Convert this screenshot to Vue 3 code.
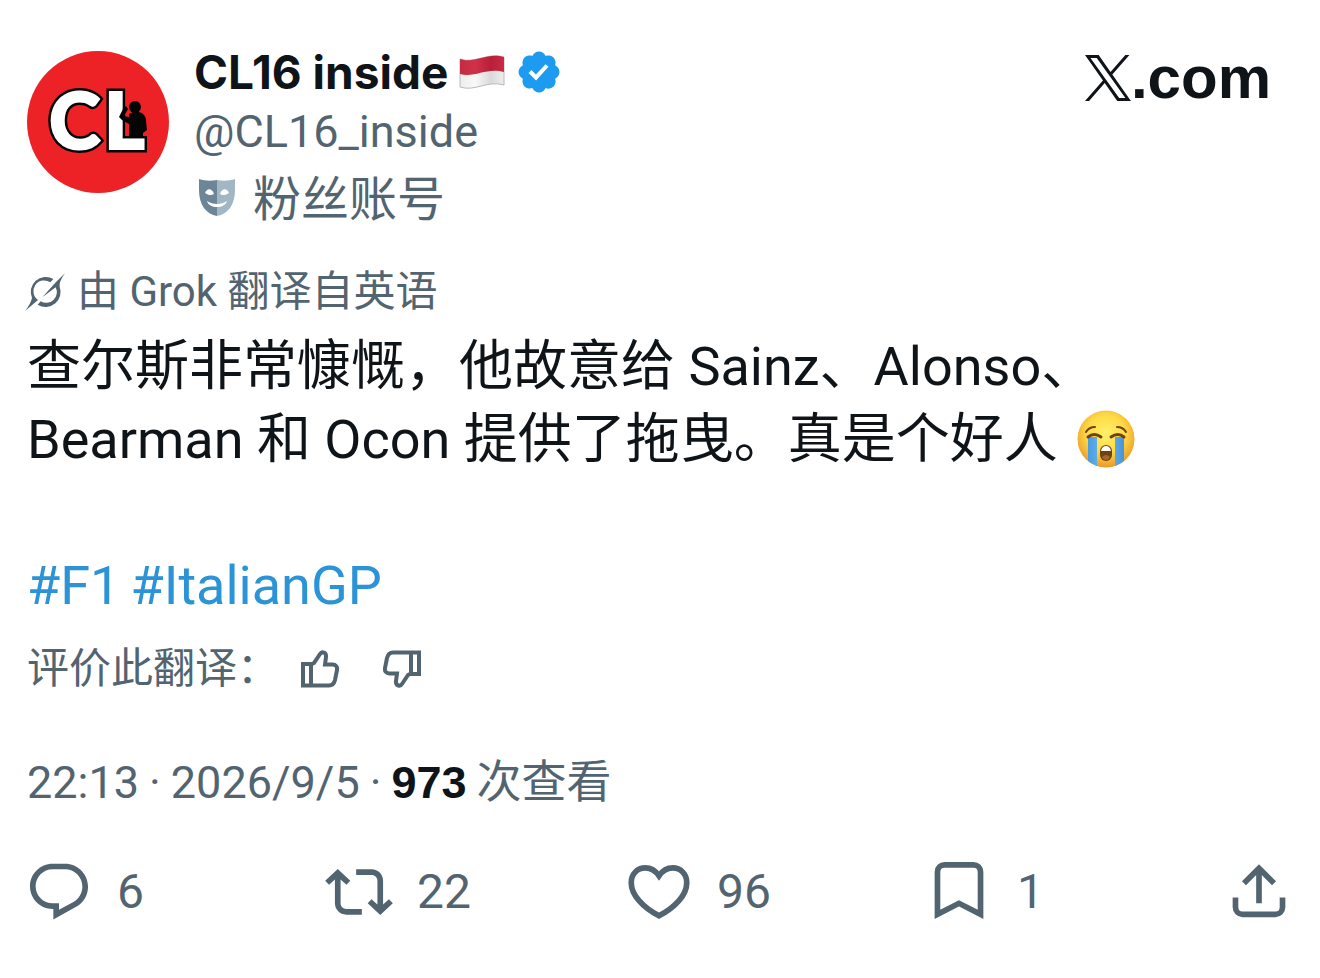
<!--
  Post detail card
  author, translated text, stats and actions
-->
<template>
  <article class="post">
    <header class="post-header">
      <svg class="avatar" viewBox="0 0 142 142" role="img" aria-label="CL16 inside">
        <circle cx="71" cy="71" r="71" fill="#ec2227" />
        <g class="avatar-letters back" aria-hidden="true">
          <text x="22" y="98">C</text>
          <text x="77" y="98">L</text>
        </g>
        <g class="avatar-letters">
          <text x="22" y="98">C</text>
          <text x="77" y="98">L</text>
        </g>
        <g fill="#050505">
          <circle cx="108" cy="56" r="6" />
          <path d="M102 63l6-3 7 2q4 3 4 8l1 9-4 3v4h-14V73l-7-4-3-3 4-8 3-3 2 3-4 7 5 1z" />
        </g>
      </svg>

      <div class="author">
        <div class="author-row">
          <span class="author-name">CL16 inside</span>
          <svg class="flag" viewBox="0 0 46 34" role="img" aria-label="Indonesia">
            <defs>
              <linearGradient id="flagRed" x1="0" x2="1">
                <stop offset="0" stop-color="#c32c44" />
                <stop offset=".35" stop-color="#d13148" />
                <stop offset=".7" stop-color="#b81f38" />
                <stop offset="1" stop-color="#c92c44" />
              </linearGradient>
              <linearGradient id="flagWhite" x1="0" x2="1">
                <stop offset="0" stop-color="#ededed" />
                <stop offset=".35" stop-color="#f8f8f8" />
                <stop offset=".7" stop-color="#d9d9da" />
                <stop offset="1" stop-color="#eeeeee" />
              </linearGradient>
            </defs>
            <path d="M1 4c15 5 27-7 44-2v28c-17-5-29 7-44 2z" fill="url(#flagWhite)" stroke="#b9b9bb" />
            <path d="M1 4c15 5 27-7 44-2v15c-17-5-29 6-44 2z" fill="url(#flagRed)" />
          </svg>
          <svg class="badge" viewBox="0 0 22 22" role="img" aria-label="Verified">
            <path
              fill="#1d9bf0"
              d="M20.396 11c-.018-.646-.215-1.275-.57-1.816-.354-.54-.852-.972-1.438-1.246.223-.607.27-1.264.14-1.897-.131-.634-.437-1.218-.882-1.687-.47-.445-1.053-.75-1.687-.882-.633-.13-1.29-.083-1.897.14-.273-.587-.704-1.086-1.245-1.44S11.647 1.62 11 1.604c-.646.017-1.273.213-1.813.568s-.969.854-1.24 1.44c-.608-.223-1.267-.272-1.902-.14-.635.13-1.22.436-1.69.882-.445.47-.749 1.055-.878 1.688-.13.633-.08 1.29.144 1.896-.587.274-1.087.705-1.443 1.245-.356.54-.555 1.17-.574 1.817.02.647.218 1.276.574 1.817.356.54.856.972 1.443 1.245-.224.606-.274 1.263-.144 1.896.13.634.433 1.218.877 1.688.47.443 1.054.747 1.687.878.633.132 1.29.084 1.897-.136.274.586.705 1.084 1.246 1.439.54.354 1.17.551 1.816.569.647-.016 1.276-.213 1.817-.567s.972-.854 1.245-1.44c.604.239 1.266.296 1.903.164.636-.132 1.22-.447 1.68-.907.46-.46.776-1.044.908-1.681s.075-1.299-.165-1.903c.586-.274 1.084-.705 1.439-1.246.354-.54.551-1.17.569-1.816zM9.662 14.85l-3.429-3.428 1.293-1.302 2.072 2.072 4.4-4.794 1.347 1.246z"
            />
          </svg>
        </div>
        <div class="author-handle">@CL16_inside</div>
        <div class="author-label">
          <svg class="mask" viewBox="0 0 38 38" aria-hidden="true">
            <path d="M1 1c6 2 12 2 18 1v36C8 36 1 27 1 12z" fill="#6d8697" />
            <path d="M19 2c6 1 12 1 18-1v11c0 15-7 24-18 26z" fill="#a2b7c4" />
            <path d="M7 15c2-5 7-5 9 1-3 2-6 1-9-1zM22 16c2-6 7-6 9-1-3 2-6 3-9 1z" fill="#fff" />
            <path d="M9 23c6 4 14 4 20 0-2 8-18 8-20 0z" fill="#fff" />
          </svg>
          <span>粉丝账号</span>
        </div>
      </div>

      <a class="site" href="#" aria-label="X.com">
        <svg class="site-logo" viewBox="0 0 24 24" aria-hidden="true">
          <path
            d="M14.258 10.152 23.176 0h-2.113l-7.747 8.813L7.133 0H0l9.352 13.328L0 23.973h2.113l8.176-9.309 6.531 9.309h7.133zm-2.895 3.293-.949-1.328L2.875 1.56h3.246l6.086 8.523.945 1.328 7.91 11.078h-3.246z"
          />
        </svg>
        <span>.com</span>
      </a>
    </header>

    <div class="translated">
      <svg class="grok" viewBox="45 46 120 120" aria-hidden="true">
        <path d="M130 67A45 45 0 0 0 66 124Q62 142 45 163L84 130A32 32 0 0 1 121 77z" />
        <path d="M165 50Q146 76 149 90A45 45 0 0 1 83 144L92 134A32 32 0 0 0 137 92L97 122 138 76z" />
      </svg>
      <span>由 Grok 翻译自英语</span>
    </div>

    <div class="content">
      <p class="content-text">
        查尔斯非常慷慨，他故意给 Sainz、Alonso、Bearman 和 Ocon 提供了拖曳。真是个好人
        <svg class="emoji" viewBox="0 0 58 58" role="img" aria-label="crying">
          <defs>
            <radialGradient id="face" cx=".5" cy=".4" r=".6">
              <stop offset="0" stop-color="#fff06a" />
              <stop offset=".55" stop-color="#fdda45" />
              <stop offset="1" stop-color="#ec982c" />
            </radialGradient>
            <linearGradient id="tear" x1="0" x2="1">
              <stop offset="0" stop-color="#4a9ddf" />
              <stop offset=".5" stop-color="#73baf0" />
              <stop offset="1" stop-color="#4593d9" />
            </linearGradient>
          </defs>
          <circle cx="29" cy="29" r="28.5" fill="url(#face)" />
          <path d="M11 27h9v29Q15 54 11 51zM38 27h9v24q-4 3-9 5z" fill="url(#tear)" />
          <g fill="none" stroke="#714111" stroke-linecap="round">
            <path d="M9 22q3-5 9-5M49 22q-3-5-9-5" stroke-width="2" />
            <path d="M11 27q6-5 13 0M34 27q7-5 13 0" stroke-width="3" />
          </g>
          <rect x="23" y="35" width="12" height="16" rx="6" fill="#714111" />
          <path d="M24 41q1-5 5-5t5 5z" fill="#fff" />
          <path d="M25 47q4-4 8 0-1 3-4 3t-4-3z" fill="#a6652c" />
        </svg>
      </p>
      <p class="content-tags">
        <a v-for="tag in tags" :key="tag" href="#">{{ tag }}</a>
      </p>
    </div>

    <div class="rate">
      <span>评价此翻译：</span>
      <button
        v-for="vote in votes"
        :key="vote.name"
        type="button"
        class="rate-btn"
        :class="vote.name"
        :aria-label="vote.label"
      >
        <svg viewBox="0 0 38 38" aria-hidden="true">
          <path
            d="M11 14l2-1 6-9C21 1 25.500 2.500 25 7l-1 7.500h7.500c3.500 0 5 2.500 4.500 5.500l-2 10c-1 4-3 5.500-6 5.500H2V14zM10 14v21"
          />
        </svg>
      </button>
    </div>

    <div class="meta">
      <time>22:13</time>
      <span>·</span>
      <time>2026/9/5</time>
      <span>·</span>
      <strong>973</strong>
      <span>次查看</span>
    </div>

    <footer class="actions">
      <button
        v-for="item in actions"
        :key="item.name"
        type="button"
        class="action"
        :aria-label="item.label"
      >
        <svg viewBox="0 0 24 24" :class="{ outline: item.outline }" aria-hidden="true">
          <path :d="item.path" />
        </svg>
        <span v-if="item.count">{{ item.count }}</span>
      </button>
    </footer>
  </article>
</template>

<script setup>
const tags = ['#F1', '#ItalianGP'];

const votes = [
  { name: 'up', label: '赞' },
  { name: 'down', label: '踩' }
];

const actions = [
  {
    name: 'reply',
    label: '回复',
    count: 6,
    path: 'M1.751 10c0-4.42 3.584-8 8.005-8h4.366c4.49 0 8.129 3.64 8.129 8.13 0 2.96-1.607 5.68-4.196 7.11l-8.054 4.46v-3.69h-.067c-4.49.1-8.183-3.51-8.183-8.01zm8.005-6c-3.317 0-6.005 2.69-6.005 6 0 3.37 2.77 6.08 6.138 6.01l.351-.01h1.761v2.3l5.087-2.81c1.951-1.08 3.163-3.13 3.163-5.36 0-3.39-2.744-6.13-6.129-6.13H9.756z'
  },
  {
    name: 'repost',
    label: '转帖',
    count: 22,
    path: 'M4.5 3.88l4.432 4.14-1.364 1.46L5.5 7.55V16c0 1.1.896 2 2 2H13v2H7.5c-2.209 0-4-1.79-4-4V7.55L1.432 9.48.068 8.02 4.5 3.88zM16.5 6H11V4h5.5c2.209 0 4 1.79 4 4v8.45l2.068-1.93 1.364 1.46-4.432 4.14-4.432-4.14 1.364-1.46 2.068 1.93V8c0-1.1-.896-2-2-2z'
  },
  {
    name: 'like',
    label: '喜欢',
    count: 96,
    outline: true,
    path: 'M12 6.300C10.700 4.400 9 3.500 7.200 3.500 4.300 3.500 2.200 5.700 2.200 8.700c0 4.400 4.300 8.900 9.800 11.700 5.500-2.800 9.800-7.300 9.800-11.700 0-3-2.100-5.200-5-5.200-1.800 0-3.500.9-4.800 2.800z'
  },
  {
    name: 'bookmark',
    label: '书签',
    count: 1,
    outline: true,
    path: 'M4.400 19.900V4.900c0-1.400 1.100-2.500 2.500-2.500h10.200c1.400 0 2.500 1.100 2.500 2.500v15L12 16z'
  },
  {
    name: 'share',
    label: '分享',
    outline: true,
    path: 'M12 16V3.600M6.700 8.900 12 3.600l5.300 5.300M3.700 13.900v3.500c0 1.400 1.100 2.500 2.500 2.500h11.600c1.400 0 2.500-1.100 2.500-2.500v-3.500'
  }
];
</script>

<style>
body {
  background: #fff;
}
</style>

<style scoped>
.post {
  padding: 42px 27px 48px 27px;
  font-family: Roboto, "Noto Sans CJK SC", sans-serif;
  color: #0f1419;
}

.post-header {
  display: flex;
  align-items: flex-start;
}

/* avatar */
.avatar {
  flex: none;
  width: 142px;
  height: 142px;
  margin-top: 9px;
}

.avatar-letters {
  font-family: Lato, sans-serif;
  font-size: 78px;
  font-weight: 900;
  fill: #fff;
  stroke: #fff;
  stroke-width: 2px;
}

.avatar-letters.back {
  stroke: #050505;
  stroke-width: 7px;
}

.author {
  flex: 1;
  margin-left: 25px;
  font-size: 48px;
  line-height: 60px;
  color: #536471;
}

.author-row {
  display: flex;
  align-items: center;
}

.author-name {
  font-family: Inter, sans-serif;
  font-size: 46px;
  font-weight: 700;
  color: #0f1419;
}

.author-handle {
  font-size: 45px;
}

.flag {
  width: 46px;
  height: 34px;
  margin-left: 11px;
}

.badge {
  width: 48px;
  height: 48px;
  margin-left: 10px;
}

.author-label {
  display: flex;
  align-items: flex-start;
  gap: 17px;
  margin-top: 8px;
}

.mask {
  width: 38px;
  height: 38px;
  margin: 8px 0 0 4px;
}

/* X.com */
.site {
  display: flex;
  align-items: center;
  margin: 6px 22px 0 0;
  font-family: "Liberation Sans", sans-serif;
  font-size: 60px;
  font-weight: 700;
  line-height: 60px;
  color: #0f1419;
  text-decoration: none;
}

.site-logo {
  width: 46px;
  height: 46px;
  fill: #0f1419;
}

.translated {
  display: flex;
  align-items: center;
  gap: 12px;
  margin: 35px 0 0 -2px;
  font-size: 42px;
  line-height: 54px;
  color: #536471;
}

.grok {
  width: 40px;
  height: 40px;
  fill: #536471;
}

/* content */
.content {
  margin-top: 11px;
  font-size: 54px;
  line-height: 73px;
}

.content-text {
  margin: 0;
}

.content-tags {
  display: flex;
  gap: 10px;
  margin: 73px 0 0;
}

.content-tags a {
  color: #2b93d6;
  text-decoration: none;
}

.emoji {
  width: 58px;
  height: 58px;
  margin-left: 6px;
  vertical-align: -10px;
}

.rate {
  display: flex;
  align-items: center;
  margin-top: 20px;
  font-size: 42px;
  line-height: 54px;
  color: #536471;
}

.rate-btn {
  display: flex;
  padding: 0;
  border: 0;
  background: none;
  cursor: pointer;
}

.rate-btn svg {
  width: 38px;
  height: 38px;
  fill: none;
  stroke: #536471;
  stroke-width: 4;
}

.rate-btn.up {
  margin-left: 22px;
}

.rate-btn.down {
  margin-left: 44px;
}

.rate-btn.down svg {
  transform: rotate(180deg);
}

.meta {
  display: flex;
  gap: 10px;
  margin-top: 60px;
  font-size: 45px;
  line-height: 54px;
  color: #536471;
}

.meta strong {
  font-family: "Liberation Sans", sans-serif;
  font-weight: 700;
  color: #0f1419;
}

/* actions */
.actions {
  display: flex;
  margin: 48px 0 0 -2px;
}

.action {
  display: flex;
  flex: 1;
  align-items: center;
  gap: 24px;
  padding: 0;
  border: 0;
  background: none;
  font-family: inherit;
  font-size: 48px;
  line-height: 68px;
  color: #536471;
  cursor: pointer;
}

.action:last-child {
  flex: none;
}

.action svg {
  width: 68px;
  height: 68px;
  fill: #536471;
}

.action svg.outline {
  fill: none;
  stroke: #536471;
  stroke-width: 2;
}
</style>
